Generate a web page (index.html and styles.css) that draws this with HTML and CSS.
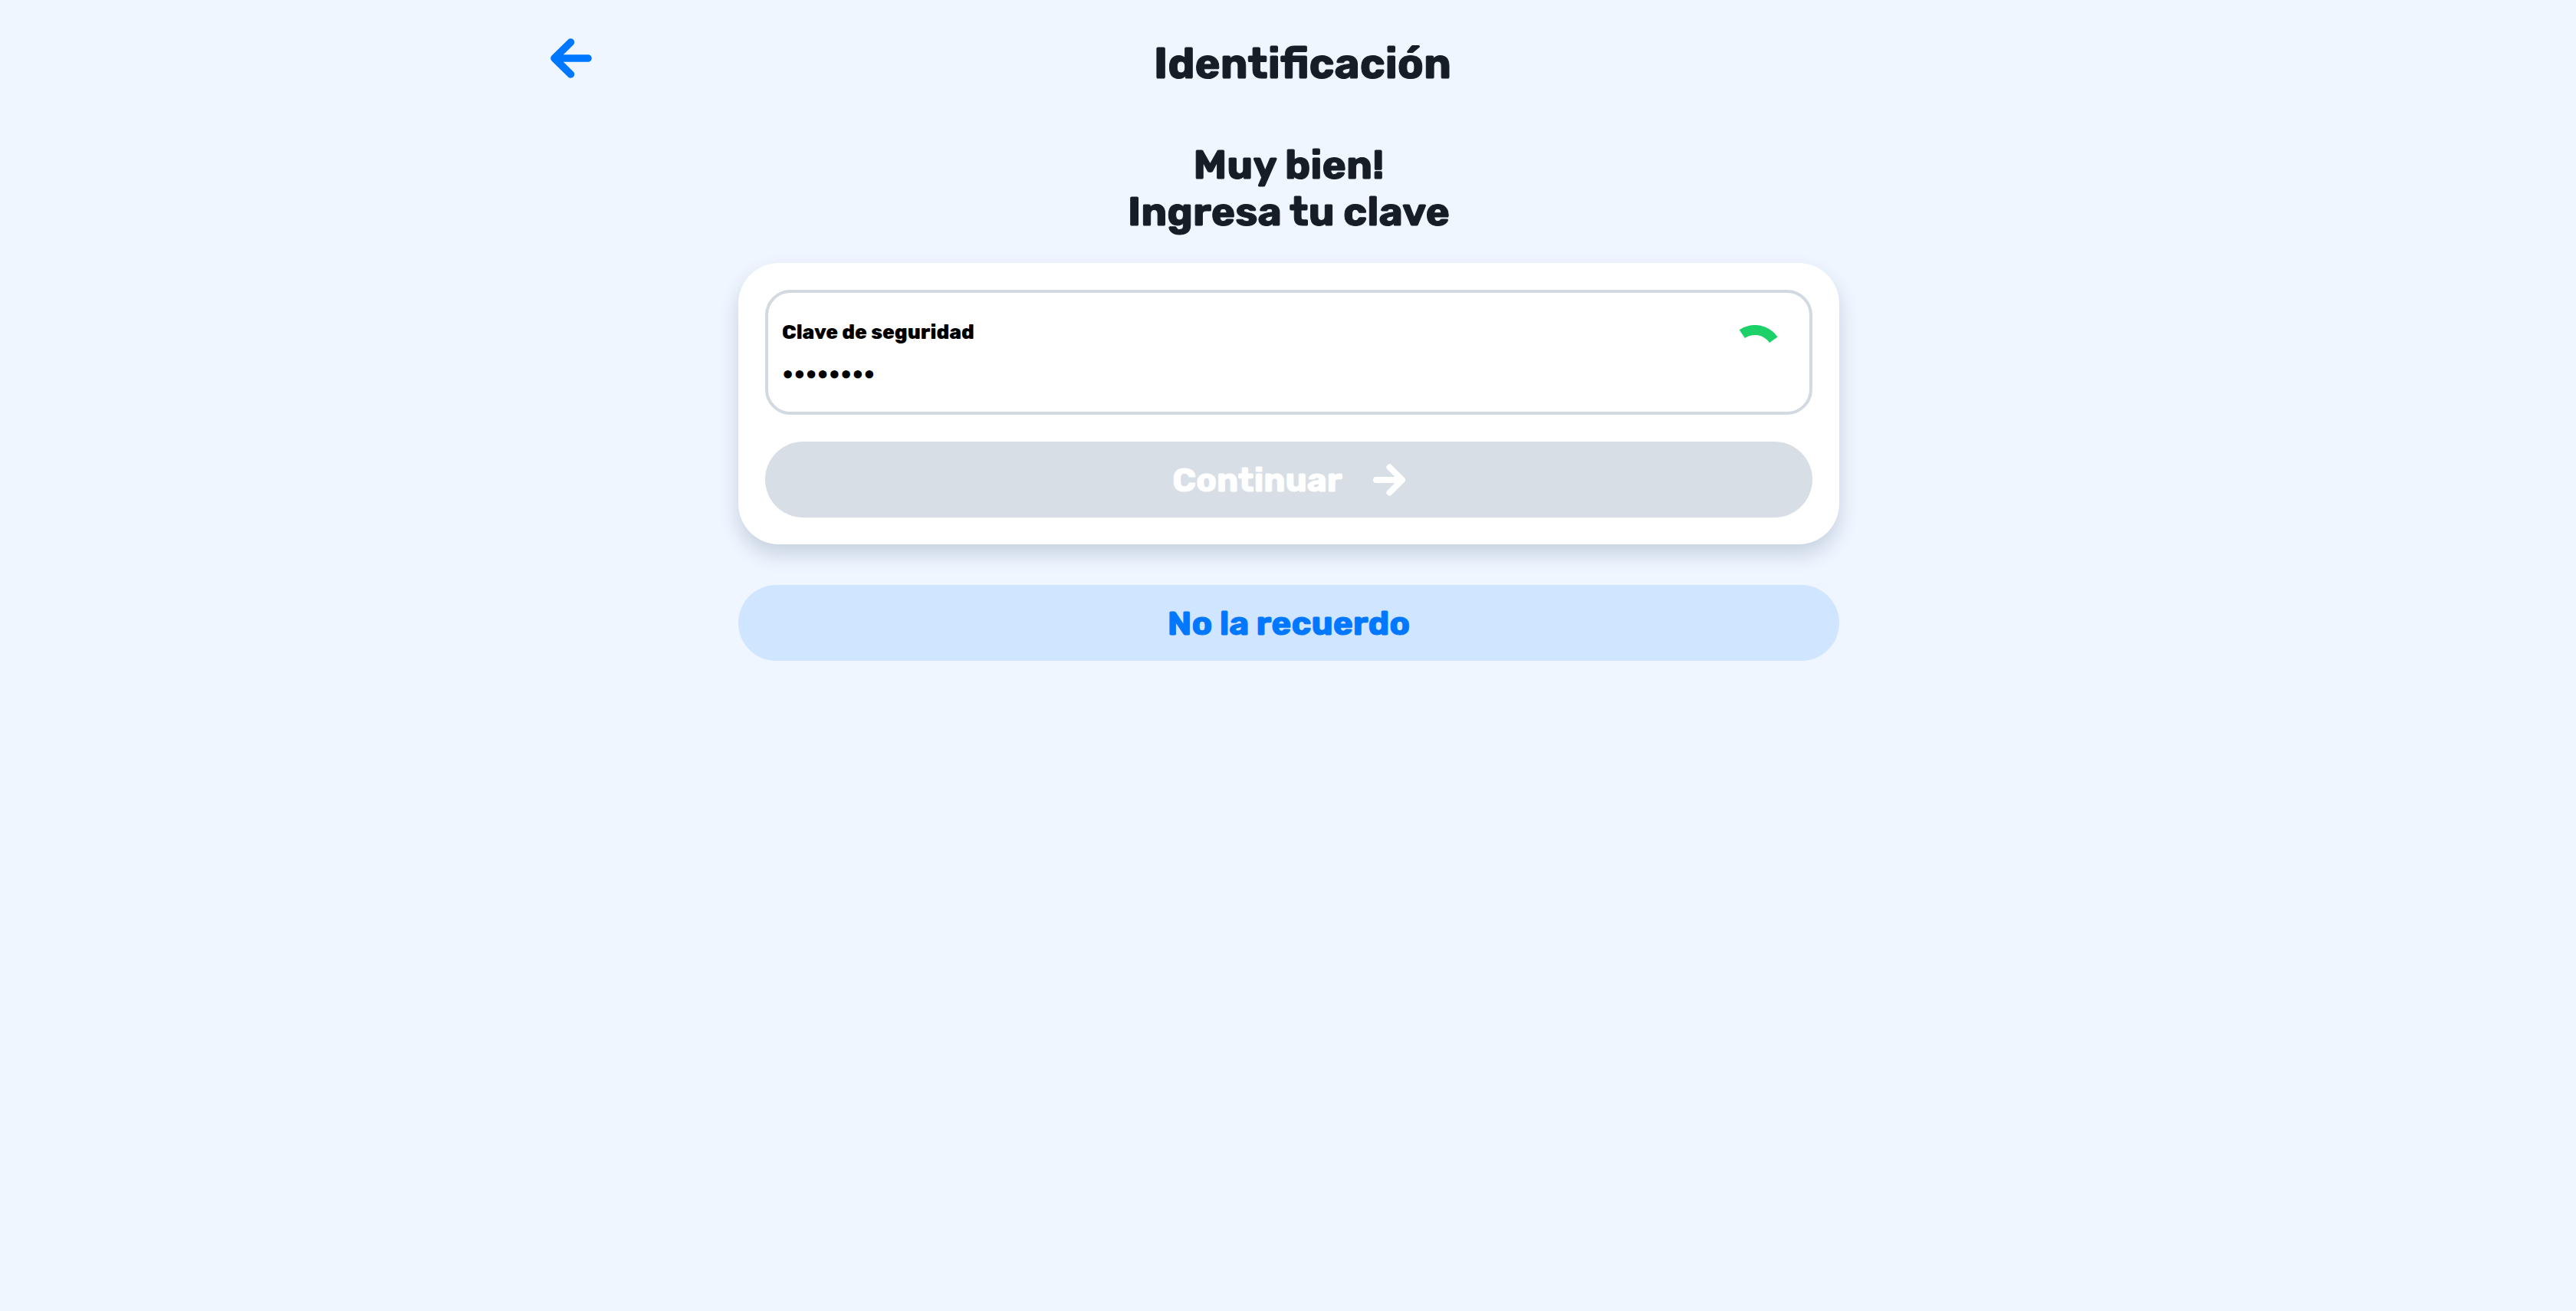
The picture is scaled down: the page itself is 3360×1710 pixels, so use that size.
FILE: index.html
```html
<!DOCTYPE html>
<html lang="es">
<head>
  <meta charset="utf-8">
  <meta name="viewport" content="width=device-width, initial-scale=1">
  <title>Identificación</title>
  <link rel="stylesheet" href="styles.css">
</head>
<body>
  <header class="topbar">
    <button class="back" type="button" aria-label="Volver">
      <svg viewBox="0 0 54 52" width="54" height="52" aria-hidden="true">
        <path d="M26.5 5 5 26l21.5 21M5 26h44" fill="none" stroke="currentColor" stroke-width="9.6" stroke-linecap="round" stroke-linejoin="round"/>
      </svg>
    </button>
    <h1 class="title">Identificación</h1>
  </header>
  <main class="content">
    <h2 class="heading">Muy bien!<br>Ingresa tu clave</h2>
    <form class="card">
      <div class="field">
        <div class="entry">
          <label class="label" for="clave">Clave de seguridad</label>
          <input class="input" id="clave" type="password" value="12345678">
        </div>
        <svg class="spinner" viewBox="0 0 72 72" width="72" height="72" aria-hidden="true">
          <path d="M15.6 6.3A36 36 0 0 1 65.7 15.6L55 23A23 23 0 0 0 23 17Z" fill="currentColor"/>
        </svg>
      </div>
      <button class="button primary" type="submit" disabled>
        <span>Continuar</span>
        <svg viewBox="0 0 42 42" width="42" height="42" aria-hidden="true">
          <path d="M21.5 4.5 38 21 21.5 37.5M38 21H4" fill="none" stroke="currentColor" stroke-width="8" stroke-linecap="round" stroke-linejoin="round"/>
        </svg>
      </button>
    </form>
    <button class="button secondary" type="button">No la recuerdo</button>
  </main>
</body>
</html>
```
FILE: styles.css
```css
* {
  box-sizing: border-box;
}

body {
  margin: 0;
  min-height: 100vh;
  background: #eff6ff;
  color: #171d26;
  font-family: Rubik, Inter, sans-serif;
}

button {
  border: 0;
  font: inherit;
  cursor: pointer;
}

.topbar {
  display: grid;
  grid-template-columns: 1fr auto 1fr;
  align-items: start;
  width: 60%;
  margin: 0 auto;
  padding: 42px 0 0 38px;
}

.back {
  justify-self: start;
  display: flex;
  padding: 8px;
  background: none;
  color: #0077ff;
}

.title {
  margin: 0;
  padding-top: 9px;
  font-size: 56px;
  font-weight: 700;
  line-height: 64px;
  -webkit-text-stroke: 1px currentColor;
}

.content {
  max-width: 1500px;
  margin: 0 auto;
  padding: 69px 31px 69px 33px;
}

.heading {
  margin: 0 0 37px;
  font-size: 53px;
  font-weight: 700;
  line-height: 61px;
  text-align: center;
  -webkit-text-stroke: 1px currentColor;
}

.card {
  display: flex;
  flex-direction: column;
  gap: 35px;
  margin-bottom: 53px;
  padding: 35px;
  border-radius: 53px;
  background: #fff;
  box-shadow: 0 13px 26px rgba(13, 45, 75, 0.18);
}

.field {
  display: flex;
  align-items: center;
  padding: 33px 35px 33px 18px;
  border: 4px solid #d3d9e0;
  border-radius: 33px;
}

.entry {
  display: flex;
  flex: 1;
  flex-direction: column;
  gap: 19px;
  padding-top: 3px;
}

.label {
  color: #000;
  font-size: 26px;
  font-weight: 800;
  line-height: 32px;
}

.input {
  width: 100%;
  height: 35px;
  padding: 0;
  border: 0;
  outline: 0;
  background: transparent;
  color: #000;
  font: 400 27px/35px Inter, sans-serif;
  -webkit-text-stroke: 2px currentColor;
}

.spinner {
  color: #1bd168;
}

.button {
  display: flex;
  align-items: center;
  justify-content: center;
  gap: 40px;
  width: 100%;
  height: 99px;
  padding: 0;
  border-radius: 50px;
  font-size: 44px;
  font-weight: 700;
  line-height: 52px;
  -webkit-text-stroke: 1px currentColor;
}

.primary {
  background: #d7dee6;
  color: #fff;
  cursor: default;
}

.secondary {
  background: #d0e5ff;
  color: #0077ff;
}
```
